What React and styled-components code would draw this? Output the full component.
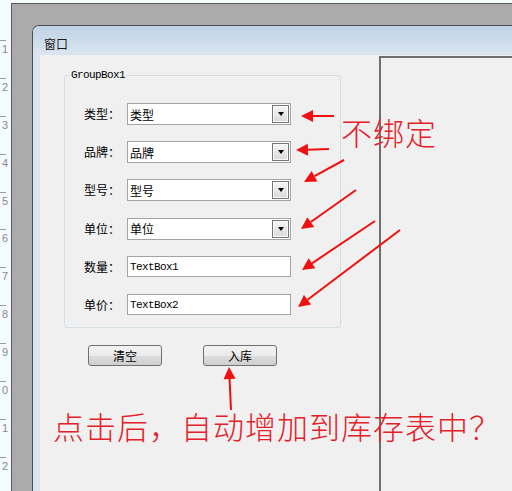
import React from 'react'
import styled, { createGlobalStyle } from 'styled-components'

const GlobalStyle = createGlobalStyle`
  html, body { margin: 0; padding: 0; }
  body {
    width: 512px;
    height: 491px;
    overflow: hidden;
    font-family: "Noto Sans CJK SC", "Liberation Sans", sans-serif;
  }
`

const rulerDigits = ['1', '2', '3', '4', '5', '6', '7', '8', '9', '0', '1', '2']

const fields = [
  { label: '类型：', value: '类型', combo: true },
  { label: '品牌：', value: '品牌', combo: true },
  { label: '型号：', value: '型号', combo: true },
  { label: '单位：', value: '单位', combo: true },
  { label: '数量：', value: 'TextBox1' },
  { label: '单价：', value: 'TextBox2' },
]

// tail x, tail y, tip x, tip y
const arrows = [
  [334, 116, 301, 116],
  [329, 149, 296, 150],
  [344, 160, 304, 182],
  [356, 190, 301, 229],
  [375, 221, 302, 270],
  [400, 230, 298, 307],
  [231, 410, 229, 367],
]

const App = () => {
  return (
    <Page>
      <GlobalStyle />
      <Ruler>
        {rulerDigits.map((d, i) => (
          <RulerMark key={i}>
            <Tick />
            <Digit>{d}</Digit>
          </RulerMark>
        ))}
      </Ruler>
      <Designer>
        <Window>
          <TitleBar>窗口</TitleBar>
          <Client>
            <FormPane>
              <GroupBox>
                <Legend>GroupBox1</Legend>
                <FieldGrid>
                  {fields.map((f) => (
                    <React.Fragment key={f.label}>
                      <Label>{f.label}</Label>
                      {f.combo ? (
                        <Combo>
                          <span>{f.value}</span>
                          <DropButton>
                            <DropArrow />
                          </DropButton>
                        </Combo>
                      ) : (
                        <TextBox>{f.value}</TextBox>
                      )}
                    </React.Fragment>
                  ))}
                </FieldGrid>
              </GroupBox>
              <ButtonRow>
                <Button>清空</Button>
                <Button>入库</Button>
              </ButtonRow>
            </FormPane>
            <GridPanel />
          </Client>
        </Window>
      </Designer>

      <Overlay width="512" height="491" viewBox="0 0 512 491">
        {arrows.map(([x1, y1, x2, y2], i) => {
          const a = Math.atan2(y2 - y1, x2 - x1)
          const len = 12
          const half = 6
          const bx = x2 - Math.cos(a) * len
          const by = y2 - Math.sin(a) * len
          const px = -Math.sin(a) * half
          const py = Math.cos(a) * half
          return (
            <g key={i}>
              <line x1={x1} y1={y1} x2={bx} y2={by} stroke="#f01010" strokeWidth="2" />
              <polygon
                points={`${x2},${y2} ${bx + px},${by + py} ${bx - px},${by - py}`}
                fill="#f01010"
              />
            </g>
          )
        })}
      </Overlay>
      <Note $left={341} $top={116}>不绑定</Note>
      <Note $left={53} $top={410}>点击后，自动增加到库存表中？</Note>
    </Page>
  )
}

export default App

const Page = styled.div`
  position: relative;
  width: 512px;
  height: 491px;
  overflow: hidden;
  display: flex;
  background: #f3fbfc;
`

const Ruler = styled.div`
  width: 11px;
  flex: none;
  padding-top: 40px;
  box-sizing: border-box;
`

const RulerMark = styled.div`
  height: 37.9px;
`

const Tick = styled.div`
  width: 6px;
  height: 1px;
  background: #9a9a9a;
`

const Digit = styled.div`
  margin-top: 3px;
  padding-left: 2px;
  font-family: "Liberation Sans", sans-serif;
  font-size: 11px;
  line-height: 10px;
  color: #8a8a8a;
`

const Designer = styled.div`
  flex: 1;
  display: flex;
  margin-top: 3px;
  padding: 21px 0 0 20px;
  background: #ababab;
  border-left: 1px solid #5a5a5a;
  border-top: 1px solid #5a5a5a;
`

const Window = styled.div`
  flex: 1;
  display: flex;
  flex-direction: column;
  background: #d8e4f0;
  border-left: 1px solid #4f4f4f;
  border-top: 1px solid #4f4f4f;
  border-top-left-radius: 7px;
  overflow: hidden;
`

const TitleBar = styled.div`
  height: 29px;
  box-sizing: border-box;
  padding: 6px 0 0 11px;
  display: flex;
  align-items: center;
  background: linear-gradient(#bfd2e5, #dbe6f1);
  font-size: 12px;
  color: #1a1a1a;
`

const Client = styled.div`
  flex: 1;
  display: flex;
  margin-left: 7px;
  background: #f0f0f0;
`

const FormPane = styled.div`
  width: 339px;
  flex: none;
  box-sizing: border-box;
  padding: 14px 0 0 24px;
`

const GroupBox = styled.fieldset`
  width: 277px;
  box-sizing: border-box;
  margin: 0;
  padding: 0;
  min-width: 0;
  border: 1px solid #d3dde4;
  border-radius: 3px;
`

const Legend = styled.legend`
  margin-left: 5px;
  padding: 0 1px;
  font-family: "Liberation Mono", monospace;
  font-size: 11px;
  line-height: 12px;
  letter-spacing: -0.6px;
  color: #000;
`

const FieldGrid = styled.div`
  display: grid;
  grid-template-columns: 43px 164px;
  grid-auto-rows: 22px;
  row-gap: 16.2px;
  align-items: center;
  padding: 22px 0 11px 19px;
`

const Label = styled.div`
  font-size: 12px;
  line-height: 22px;
  color: #000;
`

const Combo = styled.div`
  height: 22px;
  box-sizing: border-box;
  display: flex;
  align-items: center;
  justify-content: space-between;
  padding-left: 2px;
  border: 1px solid #a4a4a4;
  background: #fff;
  font-size: 12px;
  color: #000;
`

const DropButton = styled.div`
  width: 17px;
  height: 18px;
  box-sizing: border-box;
  margin-right: 1px;
  display: flex;
  align-items: center;
  justify-content: center;
  border: 1px solid #767676;
  box-shadow: inset 0 0 0 1px #fafafa;
  background: linear-gradient(#f6f6f6, #d9d9d9);
`

const DropArrow = styled.div`
  width: 0;
  height: 0;
  border-left: 3.5px solid transparent;
  border-right: 3.5px solid transparent;
  border-top: 4px solid #000;
`

const TextBox = styled.div`
  height: 21px;
  box-sizing: border-box;
  display: flex;
  align-items: center;
  padding-left: 2px;
  border: 1px solid #a4a4a4;
  background: #fff;
  font-family: "Liberation Mono", monospace;
  font-size: 11px;
  letter-spacing: -0.6px;
  color: #000;
`

const ButtonRow = styled.div`
  display: flex;
  gap: 41px;
  margin-top: 17px;
  padding-left: 24px;
`

const Button = styled.button`
  width: 74px;
  height: 21px;
  padding: 0;
  border: 1px solid #707070;
  border-radius: 3px;
  background: linear-gradient(#f2f2f2 0%, #ebebeb 50%, #dddddd 50%, #cfcfcf 100%);
  font-family: "Noto Sans CJK SC", sans-serif;
  font-size: 12px;
  line-height: 19px;
  color: #000;
`

const GridPanel = styled.div`
  flex: 1;
  margin-top: 1px;
  background: #f0f0f0;
  border-top: 2px solid #6e6e6e;
  border-left: 2px solid #6e6e6e;
`

const Overlay = styled.svg`
  position: absolute;
  left: 0;
  top: 0;
  pointer-events: none;
`

const Note = styled.div`
  position: absolute;
  left: ${(p) => p.$left}px;
  top: ${(p) => p.$top}px;
  font-family: "Noto Sans CJK SC", sans-serif;
  font-weight: 300;
  font-size: 31px;
  line-height: 31px;
  letter-spacing: 1px;
  color: #e4202a;
  white-space: nowrap;
`
